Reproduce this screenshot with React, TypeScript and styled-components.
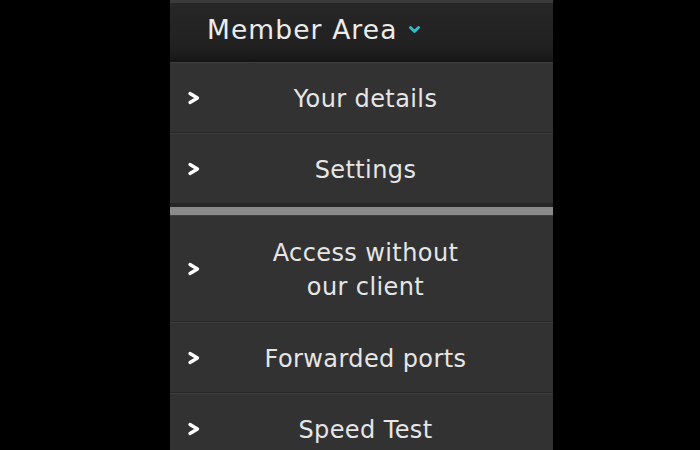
import styled, { createGlobalStyle } from 'styled-components';

const GlobalStyle = createGlobalStyle`
  html, body {
    margin: 0;
    background: #000;
  }
  body {
    font-family: 'DejaVu Sans', Verdana, sans-serif;
  }
`;

const Page = styled.div`
  height: 450px;
  overflow: hidden;
  padding-left: 170px;
  background: #000;
`;

const Panel = styled.nav`
  width: 383px;
  display: flex;
  flex-direction: column;
  background: #323232;
`;

const Header = styled.header`
  box-sizing: border-box;
  height: 62px;
  border-top: 3px solid #3a3a3a;
  border-bottom: 2px solid #141414;
  background: linear-gradient(#272727, #212121 75%, #181818);
  display: flex;
  align-items: center;
  padding: 0 0 4px 37px;
  color: #ececec;
  font-size: 26.5px;
  letter-spacing: 1.1px;
`;

const DownIcon = styled.svg`
  margin-left: 11px;
  margin-top: 1px;
`;

const Row = styled.a<{ $tall?: boolean }>`
  box-sizing: border-box;
  height: ${(p) => (p.$tall ? '107px' : '71px')};
  display: grid;
  grid-template-columns: 44px 1fr 36px;
  align-items: center;
  border-top: 1px solid #3f3f3f;
  border-bottom: 1px solid #272727;
  color: #e6e6e6;
  font-size: 24px;
  letter-spacing: 0.4px;
  line-height: 34px;
  text-align: center;
  text-decoration: none;
`;

const Label = styled.span`
  grid-column: 2;
  padding-top: 2px;
`;

const RightIcon = styled.svg`
  margin-left: 17px;
`;

const Divider = styled.div`
  height: 8px;
  border-top: 3px solid #262626;
  background: #8a8a8a;
`;

const Chevron = () => (
  <RightIcon width="14" height="14" viewBox="0 0 14 14">
    <polyline
      points="3,2.5 10.5,7 3,11.5"
      fill="none"
      stroke="#fff"
      strokeWidth="3.4"
      strokeLinecap="round"
      strokeLinejoin="round"
    />
  </RightIcon>
);

const items = [
  [{ label: 'Your details' }, { label: 'Settings' }],
  [
    { label: 'Access without\nour client', tall: true },
    { label: 'Forwarded ports' },
    { label: 'Speed Test' },
  ],
];

const App = () => {
  return (
    <Page>
      <GlobalStyle />
      <Panel>
        <Header>
          Member Area
          <DownIcon width="11" height="8" viewBox="0 0 11 8">
            <polyline
              points="1.5,1.5 5.5,5.5 9.5,1.5"
              fill="none"
              stroke="#36bcc6"
              strokeWidth="2.8"
              strokeLinecap="round"
              strokeLinejoin="round"
            />
          </DownIcon>
        </Header>
        {items.map((group, gi) => (
          <div key={gi}>
            {gi > 0 && <Divider />}
            {group.map((item) => (
              <Row href="#" key={item.label} $tall={item.tall}>
                <Chevron />
                <Label>
                  {item.label.split('\n').map((line) => (
                    <div key={line}>{line}</div>
                  ))}
                </Label>
              </Row>
            ))}
          </div>
        ))}
      </Panel>
    </Page>
  );
};

export default App;
